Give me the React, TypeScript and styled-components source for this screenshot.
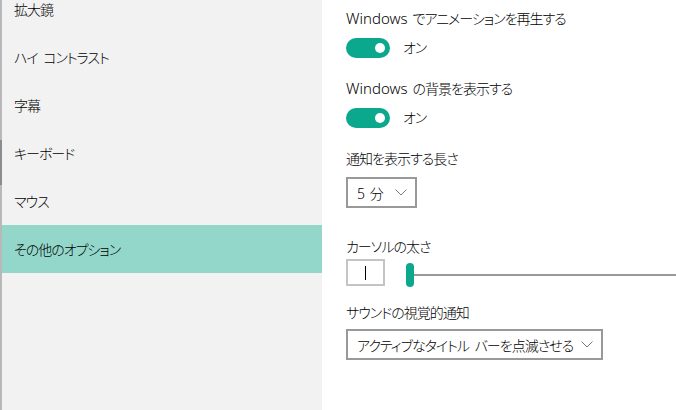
import React from 'react';
import styled, { createGlobalStyle } from 'styled-components';

const GlobalStyle = createGlobalStyle`
  html, body {
    margin: 0;
    padding: 0;
    background: #ffffff;
    overflow: hidden;
  }
  body {
    font-family: 'Noto Sans', 'Noto Sans CJK JP', sans-serif;
    font-feature-settings: 'palt';
    font-weight: 300;
    font-size: 14px;
    letter-spacing: -1px;
    word-spacing: 3px;
    color: #000000;
  }
`;

const Page = styled('div')({
  display: 'flex',
  width: '676px',
  height: '410px',
  overflow: 'hidden',
});

const Rail = styled('div')({
  width: '2px',
  flexShrink: 0,
  background: 'linear-gradient(to bottom, #b8b8b8 0px, #b8b8b8 140px, #8c8c8c 140px, #8c8c8c 185px, #b8b8b8 185px)',
});

const Sidebar = styled('nav')({
  width: '320px',
  flexShrink: 0,
  backgroundColor: '#f2f2f2',
  display: 'flex',
  flexDirection: 'column',
  marginTop: '-15px',
});

const NavItem = styled('div')<{ $active?: boolean }>((props) => ({
  height: '48px',
  display: 'flex',
  alignItems: 'center',
  paddingLeft: '12px',
  backgroundColor: props.$active ? '#93d7cb' : 'transparent',
}));

const Content = styled('main')({
  flex: 1,
  paddingLeft: '24px',
  paddingTop: '8px',
  display: 'flex',
  flexDirection: 'column',
  alignItems: 'flex-start',
});

const Label = styled('div')<{ $top?: number }>((props) => ({
  height: '20px',
  display: 'flex',
  alignItems: 'center',
  marginTop: `${props.$top ?? 0}px`,
  whiteSpace: 'nowrap',
}));

const Latin = styled('span')({
  fontSize: '15px',
  letterSpacing: '0',
  marginRight: '5px',
});

const ToggleRow = styled('div')({
  display: 'flex',
  alignItems: 'center',
  gap: '13px',
  marginTop: '10px',
  lineHeight: '20px',
});

const Track = styled('div')({
  width: '44px',
  height: '20px',
  borderRadius: '10px',
  backgroundColor: '#0ca88e',
  display: 'flex',
  alignItems: 'center',
  justifyContent: 'flex-end',
  paddingRight: '5px',
  boxSizing: 'border-box',
});

const Knob = styled('div')({
  width: '10px',
  height: '10px',
  borderRadius: '50%',
  backgroundColor: '#ffffff',
});

const Select = styled('div')<{ $width: number; $top: number }>((props) => ({
  width: `${props.$width}px`,
  height: '31px',
  marginTop: `${props.$top}px`,
  border: '2px solid #999999',
  boxSizing: 'border-box',
  display: 'flex',
  alignItems: 'center',
  justifyContent: 'space-between',
  padding: '0 8px 0 9px',
  whiteSpace: 'nowrap',
}));

const SliderRow = styled('div')({
  display: 'flex',
  alignItems: 'center',
  marginTop: '2px',
  width: '100%',
});

const CursorBox = styled('div')({
  width: '39px',
  height: '27px',
  border: '2px solid #c4c4c4',
  boxSizing: 'border-box',
  display: 'flex',
  alignItems: 'center',
  justifyContent: 'center',
  flexShrink: 0,
});

const Caret = styled('div')({
  width: '1px',
  height: '14px',
  backgroundColor: '#000000',
});

const Slider = styled('div')({
  flex: 1,
  display: 'flex',
  alignItems: 'center',
  marginLeft: '21px',
  marginTop: '5px',
});

const Thumb = styled('div')({
  width: '8px',
  height: '24px',
  borderRadius: '4px',
  backgroundColor: '#0ca88e',
  flexShrink: 0,
});

const Rule = styled('div')({
  flex: 1,
  height: '2px',
  backgroundColor: '#999999',
});

const Chevron = () => (
  <svg width="12" height="7" viewBox="0 0 12 7">
    <polyline points="0.5,0.5 6,6 11.5,0.5" fill="none" stroke="#7a7a7a" strokeWidth="1" />
  </svg>
);

const Toggle = () => (
  <ToggleRow>
    <Track>
      <Knob />
    </Track>
    <span>オン</span>
  </ToggleRow>
);

const navItems = ['拡大鏡', 'ハイ コントラスト', '字幕', 'キーボード', 'マウス', 'その他のオプション'];

const App = () => {
  return (
    <Page>
      <GlobalStyle />
      <Rail />
      <Sidebar>
        {navItems.map((item) => (
          <NavItem key={item} $active={item === 'その他のオプション'}>
            {item}
          </NavItem>
        ))}
      </Sidebar>
      <Content>
        <Label>
          <Latin>Windows</Latin>でアニメーションを再生する
        </Label>
        <Toggle />
        <Label $top={20}>
          <Latin>Windows</Latin>の背景を表示する
        </Label>
        <Toggle />
        <Label $top={20}>通知を表示する長さ</Label>
        <Select $width={71} $top={9}>
          <span>5 分</span>
          <Chevron />
        </Select>
        <Label $top={28}>カーソルの太さ</Label>
        <SliderRow>
          <CursorBox>
            <Caret />
          </CursorBox>
          <Slider>
            <Thumb />
            <Rule />
          </Slider>
        </SliderRow>
        <Label $top={15}>サウンドの視覚的通知</Label>
        <Select $width={257} $top={7}>
          <span>アクティブなタイトル バーを点滅させる</span>
          <Chevron />
        </Select>
      </Content>
    </Page>
  );
};

export default App;
